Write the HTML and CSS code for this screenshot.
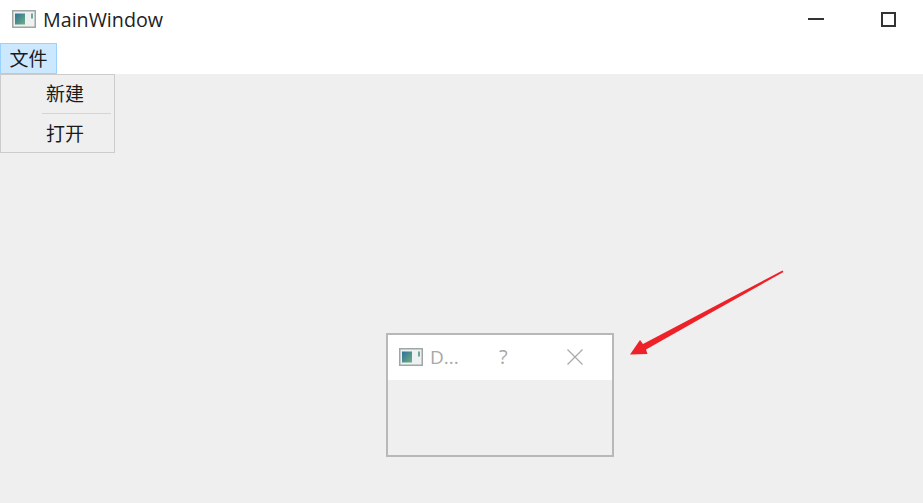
FILE: index.html
```html
<!DOCTYPE html>
<html lang="zh-CN">
<head>
    <meta charset="UTF-8">
    <title>MainWindow</title>
    <link rel="stylesheet" href="styles.css">
</head>
<body>
    <div class="window">
        <header class="titlebar">
            <svg class="app-icon" viewBox="0 0 24 18">
                <defs>
                    <linearGradient id="tela" x1="0" y1="0" x2="1" y2="1">
                        <stop offset="0" stop-color="#2f6f9a"/>
                        <stop offset="1" stop-color="#6fb080"/>
                    </linearGradient>
                </defs>
                <rect x="0.75" y="0.75" width="22.5" height="16.5" fill="#eef1f1" stroke="#a0a5a5" stroke-width="1.5"/>
                <rect x="3" y="3.5" width="10" height="11" fill="url(#tela)"/>
                <rect x="19" y="3.5" width="2" height="5" fill="#6fa79a"/>
            </svg>
            <span class="window-title">MainWindow</span>
            <div class="window-buttons">
                <span class="btn-min"></span>
                <span class="btn-max"></span>
            </div>
        </header>
        <nav class="menubar">
            <span class="menu-item">文件</span>
        </nav>
        <main class="content">
            <div class="dropdown">
                <div class="dropdown-item">新建</div>
                <div class="dropdown-sep"></div>
                <div class="dropdown-item">打开</div>
            </div>

            <svg class="arrow" viewBox="0 0 160 90" width="160" height="90">
                <path d="M153.5 0.5 L154.5 2 L82 42.8 L17 79.5 L18.5 84 L1 84.5 L11 70 L14 74 L80 39.2 Z" fill="#ee2129"/>
            </svg>

            <div class="dialog">
                <div class="dialog-title">
                    <svg class="app-icon" viewBox="0 0 24 18">
                        <rect x="0.75" y="0.75" width="22.5" height="16.5" fill="#eef1f1" stroke="#a0a5a5" stroke-width="1.5"/>
                        <rect x="3" y="3.5" width="10" height="11" fill="url(#tela)"/>
                        <rect x="19" y="3.5" width="2" height="5" fill="#6fa79a"/>
                    </svg>
                    <span class="dialog-name">D...</span>
                    <span class="dialog-help">?</span>
                    <svg class="dialog-close" viewBox="0 0 16 16" width="16" height="16">
                        <path d="M0.5 0.5 L15.5 15.5 M15.5 0.5 L0.5 15.5" stroke="#a8a8a8" stroke-width="1.2" fill="none"/>
                    </svg>
                </div>
            </div>
        </main>
    </div>
</body>
</html>
```

FILE: styles.css
```css
* {
    margin: 0;
    padding: 0;
    box-sizing: border-box;
    font-family: "Liberation Sans", "Noto Sans CJK SC", sans-serif;
}

html, body {
    height: 100%;
    overflow: hidden;
}

body {
    background-color: #efefef;
    color: #1a1a1a;
}

.window {
    display: flex;
    flex-direction: column;
    height: 100%;
}

.titlebar {
    display: flex;
    align-items: center;
    height: 42px;
    padding-left: 12px;
    padding-bottom: 4px;
    background-color: #fff;
}

.app-icon {
    width: 24px;
    height: 18px;
    flex-shrink: 0;
}

.window-title {
    margin-left: 7px;
    font-size: 19.7px;
    font-family: "Open Sans", sans-serif;
    color: #222;
}

.window-buttons {
    display: flex;
    align-items: center;
    gap: 57px;
    margin-left: auto;
    padding-right: 27px;
}

.btn-min {
    width: 16px;
    height: 2px;
    background-color: #333;
}

.btn-max {
    width: 15px;
    height: 15px;
    border: 2px solid #333;
}

.menubar {
    display: flex;
    height: 32px;
    padding-top: 1px;
    background-color: #fff;
}

.menu-item {
    display: flex;
    align-items: center;
    justify-content: center;
    width: 57px;
    padding-bottom: 3px;
    font-size: 19px;
    background-color: #cce8ff;
    border: 1px solid #99d1ff;
}

.content {
    position: relative;
    flex: 1;
    background-color: #efefef;
}

.dropdown {
    position: absolute;
    top: 0;
    left: 0;
    width: 115px;
    height: 79px;
    padding: 1px 1px 0 1px;
    border: 1px solid #ccc;
    background-color: #efefef;
}

.dropdown-item {
    height: 37px;
    line-height: 37px;
    padding-left: 44px;
    font-size: 19px;
}

.dropdown-sep {
    height: 1px;
    margin: 0 2px 2px 40px;
    background-color: #d5d5d5;
}

.arrow {
    position: absolute;
    left: 629px;
    top: 196px;
}

.dialog {
    position: absolute;
    left: 386px;
    top: 259px;
    width: 228px;
    height: 124px;
    border: 2px solid #b8b8b8;
    background-color: #efefef;
}

.dialog-title {
    display: flex;
    align-items: center;
    height: 45px;
    padding-left: 11px;
    padding-bottom: 2px;
    background-color: #fff;
}

.dialog-name {
    width: 69px;
    margin-left: 7px;
    font-size: 19px;
    font-family: "Open Sans", sans-serif;
    color: #a8a8a8;
}

.dialog-help {
    width: 68px;
    font-size: 20px;
    font-family: "Open Sans", sans-serif;
    color: #a8a8a8;
}

.dialog-close {
    flex-shrink: 0;
}
```
